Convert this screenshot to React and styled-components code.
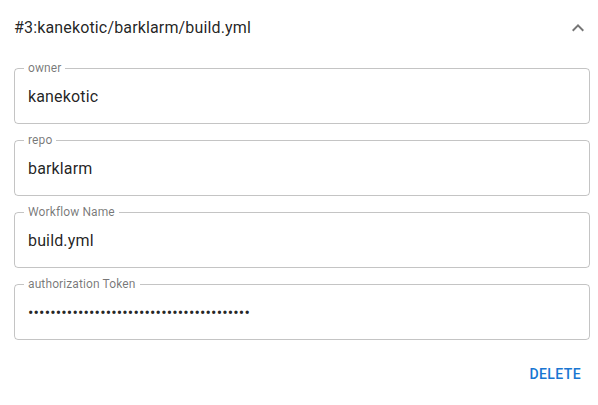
import React from "react";
import styled, { createGlobalStyle } from "styled-components";

const Global = createGlobalStyle`
  html, body { margin: 0; padding: 0; background: #fff; }
  body { font-family: Roboto, "Noto Sans", Arial, sans-serif; }
`;

const Panel = styled.div`
  width: 598px;
  background: #fff;
  color: rgba(0, 0, 0, 0.87);
`;

const Summary = styled.div`
  height: 56px;
  display: flex;
  align-items: center;
  justify-content: space-between;
  padding: 0 8px 0 14px;
`;

const Title = styled.div`
  font-size: 16px;
  line-height: 24px;
  letter-spacing: 0.00938em;
  color: rgba(0, 0, 0, 0.87);
`;

const ExpandIcon = styled.span`
  width: 24px;
  height: 24px;
  display: flex;
  align-items: center;
  justify-content: center;
  color: rgba(0, 0, 0, 0.54);
`;

const Details = styled.div`
  display: flex;
  flex-direction: column;
  gap: 16px;
  padding: 12px 8px 0 14px;
`;

const Field = styled.div`
  position: relative;
  height: 56px;
  box-sizing: border-box;
  border: 1px solid rgba(0, 0, 0, 0.23);
  border-radius: 4px;
  display: flex;
  align-items: center;
  padding: 0 13px;
`;

const Label = styled.span`
  position: absolute;
  top: -8px;
  left: 9px;
  padding: 0 4px;
  background: #fff;
  font-size: 12px;
  line-height: 14px;
  color: rgba(0, 0, 0, 0.54);
  letter-spacing: 0.00938em;
`;

const Input = styled.input`
  border: 0;
  outline: none;
  background: transparent;
  padding: 0;
  margin: 0;
  width: 100%;
  font-family: Roboto, "Noto Sans", Arial, sans-serif;
  font-size: 16px;
  line-height: 19px;
  letter-spacing: 0.00938em;
  color: rgba(0, 0, 0, 0.87);
`;

const Actions = styled.div`
  display: flex;
  justify-content: flex-end;
  padding: 16px 9px 0 0;
`;

const TextButton = styled.button`
  border: 0;
  background: transparent;
  padding: 6px 8px;
  height: 36px;
  font-family: Roboto, "Noto Sans", Arial, sans-serif;
  font-size: 14px;
  font-weight: 500;
  letter-spacing: 0.02857em;
  text-transform: uppercase;
  color: #1976d2;
  cursor: pointer;
`;

const fields = [
  { label: "owner", value: "kanekotic" },
  { label: "repo", value: "barklarm" },
  { label: "Workflow Name", value: "build.yml" },
  { label: "authorization Token", value: "x".repeat(40), type: "password" },
];

export default function App() {
  return (
    <>
      <Global />
      <Panel>
        <Summary>
          <Title>#3:kanekotic/barklarm/build.yml</Title>
          <ExpandIcon>
            <svg width="24" height="24" viewBox="0 0 24 24" fill="currentColor">
              <path d="M12 8l-6 6 1.41 1.41L12 10.83l4.59 4.58L18 14z" />
            </svg>
          </ExpandIcon>
        </Summary>
        <Details>
          {fields.map((f) => (
            <Field key={f.label}>
              <Label>{f.label}</Label>
              <Input type={f.type || "text"} defaultValue={f.value} readOnly />
            </Field>
          ))}
        </Details>
        <Actions>
          <TextButton>Delete</TextButton>
        </Actions>
      </Panel>
    </>
  );
}
